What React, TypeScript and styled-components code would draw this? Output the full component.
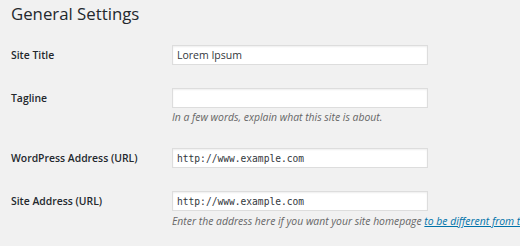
import React from "react";
import styled, { createGlobalStyle } from "styled-components";

const Global = createGlobalStyle`
  html, body { margin: 0; padding: 0; background: #f1f1f1; }
  body { font-family: "Open Sans", "Liberation Sans", sans-serif; color: #23282d; }
`;

const Page = styled.div`
  width: 520px;
  height: 246px;
  overflow: hidden;
  padding: 3px 0 0 11px;
  box-sizing: border-box;
`;

const Heading = styled.h1`
  margin: 0 0 8px 0;
  font-size: 16.8px;
  line-height: 22px;
  font-weight: 400;
  color: #23282d;
  white-space: nowrap;
`;

const Form = styled.div`
  display: flex;
  flex-direction: column;
`;

const Row = styled.div`
  display: grid;
  grid-template-columns: 161px 1fr;
  padding: 11.5px 0;
`;

const Label = styled.label`
  font-size: 10.4px;
  font-weight: 600;
  line-height: 20px;
  white-space: nowrap;
  color: #23282d;
`;

const Field = styled.div`
  display: flex;
  flex-direction: column;
  min-width: 0;
`;

const Input = styled.input<{ $mono?: boolean }>`
  box-sizing: border-box;
  width: 256px;
  height: 20px;
  margin: 0;
  padding: 0 3px 0 4px;
  border: 1px solid #dddddd;
  background: #ffffff;
  box-shadow: inset 0 1px 2px rgba(0, 0, 0, 0.07);
  outline: none;
  color: #32373c;
  font-family: ${(p) => (p.$mono ? `"DejaVu Sans Mono", "Liberation Mono", monospace` : `"Open Sans", sans-serif`)};
  font-size: ${(p) => (p.$mono ? "9.6px" : "10.5px")};
`;

const Description = styled.p`
  margin: 2.5px 0 0 0;
  font-size: 10.4px;
  line-height: 15px;
  font-style: italic;
  color: #666666;
  white-space: nowrap;
`;

const Link = styled.a`
  color: #0073aa;
  text-decoration: underline;
`;

export default function App() {
  return (
    <>
      <Global />
      <Page>
        <Heading>General Settings</Heading>
        <Form>
          <Row>
            <Label>Site Title</Label>
            <Field>
              <Input defaultValue="Lorem Ipsum" />
            </Field>
          </Row>
          <Row>
            <Label>Tagline</Label>
            <Field>
              <Input defaultValue="" />
              <Description>In a few words, explain what this site is about.</Description>
            </Field>
          </Row>
          <Row>
            <Label>WordPress Address (URL)</Label>
            <Field>
              <Input $mono defaultValue="http://www.example.com" />
            </Field>
          </Row>
          <Row>
            <Label>Site Address (URL)</Label>
            <Field>
              <Input $mono defaultValue="http://www.example.com" />
              <Description>
                Enter the address here if you want your site homepage{" "}
                <Link href="#">to be different from the directory</Link>
              </Description>
            </Field>
          </Row>
        </Form>
      </Page>
    </>
  );
}
